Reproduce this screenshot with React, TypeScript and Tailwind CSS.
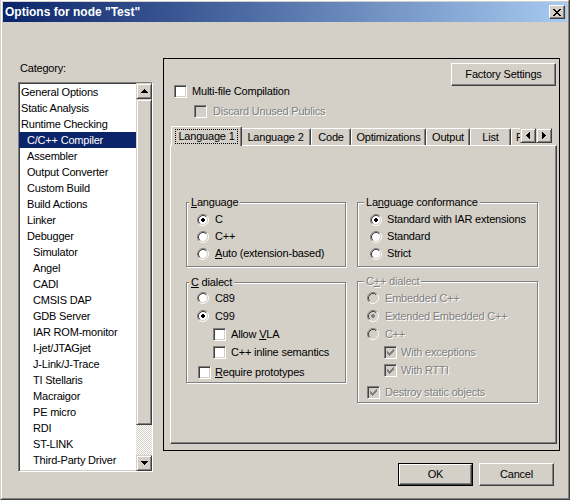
import React from "react";

const F = "font-['Liberation_Sans',Arial,sans-serif]";

const raisedBtn =
  "border border-t-white border-l-white border-r-[#404040] border-b-[#404040] shadow-[inset_-1px_-1px_0_#808080]";
const raisedSb =
  "border border-t-[#d4d0c8] border-l-[#d4d0c8] border-r-[#404040] border-b-[#404040] shadow-[inset_1px_1px_0_#fff,inset_-1px_-1px_0_#808080]";
const sunken =
  "border border-t-[#808080] border-l-[#808080] border-r-white border-b-white shadow-[inset_1px_1px_0_#404040,inset_-1px_-1px_0_#d4d0c8]";
const disText = "text-[#808080] [text-shadow:1px_1px_0_#fff]";

function Check({ checked = false, disabled = false }: { checked?: boolean; disabled?: boolean }) {
  const c = disabled ? "#808080" : "#000";
  return (
    <span
      className={`relative inline-block w-[13px] h-[13px] shrink-0 ${sunken} ${disabled ? "bg-[#d4d0c8]" : "bg-white"}`}
    >
      {checked && (
        <svg
          className="absolute left-[-1px] top-[-1px]"
          width="13"
          height="13"
          viewBox="0 0 13 13"
          shapeRendering="crispEdges"
          fill={c}
        >
          <rect x="9" y="3" width="1" height="1" />
          <rect x="8" y="4" width="2" height="1" />
          <rect x="3" y="5" width="1" height="1" />
          <rect x="7" y="5" width="3" height="1" />
          <rect x="3" y="6" width="2" height="1" />
          <rect x="6" y="6" width="3" height="1" />
          <rect x="3" y="7" width="5" height="1" />
          <rect x="4" y="8" width="3" height="1" />
          <rect x="5" y="9" width="1" height="1" />
        </svg>
      )}
    </span>
  );
}

function Radio({ checked = false, disabled = false }: { checked?: boolean; disabled?: boolean }) {
  return (
    <svg width="12" height="12" viewBox="0 0 12 12" className="shrink-0">
      <circle cx="6" cy="6" r="4.2" fill={disabled ? "#d4d0c8" : "#fff"} />
      <path d="M2.11 9.89 A5.5 5.5 0 0 1 9.89 2.11" fill="none" stroke="#808080" strokeWidth="1" />
      <path d="M9.89 2.11 A5.5 5.5 0 0 1 2.11 9.89" fill="none" stroke="#fff" strokeWidth="1" />
      <path d="M2.82 9.18 A4.5 4.5 0 0 1 9.18 2.82" fill="none" stroke="#404040" strokeWidth="1" />
      <path d="M9.18 2.82 A4.5 4.5 0 0 1 2.82 9.18" fill="none" stroke="#d4d0c8" strokeWidth="1" />
      {checked && (
        <g fill={disabled ? "#808080" : "#000"} shapeRendering="crispEdges">
          <rect x="5" y="4" width="2" height="4" />
          <rect x="4" y="5" width="4" height="2" />
        </g>
      )}
    </svg>
  );
}

function ArrowUp() {
  return (
    <svg width="7" height="4" viewBox="0 0 7 4" shapeRendering="crispEdges" fill="#000">
      <rect x="3" y="0" width="1" height="1" />
      <rect x="2" y="1" width="3" height="1" />
      <rect x="1" y="2" width="5" height="1" />
      <rect x="0" y="3" width="7" height="1" />
    </svg>
  );
}
function ArrowDown() {
  return (
    <svg width="7" height="4" viewBox="0 0 7 4" shapeRendering="crispEdges" fill="#000">
      <rect x="0" y="0" width="7" height="1" />
      <rect x="1" y="1" width="5" height="1" />
      <rect x="2" y="2" width="3" height="1" />
      <rect x="3" y="3" width="1" height="1" />
    </svg>
  );
}
function ArrowLeft() {
  return (
    <svg width="4" height="7" viewBox="0 0 4 7" shapeRendering="crispEdges" fill="#000">
      <rect x="0" y="3" width="1" height="1" />
      <rect x="1" y="2" width="1" height="3" />
      <rect x="2" y="1" width="1" height="5" />
      <rect x="3" y="0" width="1" height="7" />
    </svg>
  );
}
function ArrowRight() {
  return (
    <svg width="4" height="7" viewBox="0 0 4 7" shapeRendering="crispEdges" fill="#000">
      <rect x="0" y="0" width="1" height="7" />
      <rect x="1" y="1" width="1" height="5" />
      <rect x="2" y="2" width="1" height="3" />
      <rect x="3" y="3" width="1" height="1" />
    </svg>
  );
}
function XGlyph() {
  return (
    <svg width="8" height="7" viewBox="0 0 8 7" shapeRendering="crispEdges" fill="#000">
      <rect x="0" y="0" width="2" height="1" />
      <rect x="6" y="0" width="2" height="1" />
      <rect x="1" y="1" width="2" height="1" />
      <rect x="5" y="1" width="2" height="1" />
      <rect x="2" y="2" width="4" height="1" />
      <rect x="3" y="3" width="2" height="1" />
      <rect x="2" y="4" width="4" height="1" />
      <rect x="1" y="5" width="2" height="1" />
      <rect x="5" y="5" width="2" height="1" />
      <rect x="0" y="6" width="2" height="1" />
      <rect x="6" y="6" width="2" height="1" />
    </svg>
  );
}

const items: [string, number][] = [
  ["General Options", 0],
  ["Static Analysis", 0],
  ["Runtime Checking", 0],
  ["C/C++ Compiler", 1],
  ["Assembler", 1],
  ["Output Converter", 1],
  ["Custom Build", 1],
  ["Build Actions", 1],
  ["Linker", 1],
  ["Debugger", 1],
  ["Simulator", 2],
  ["Angel", 2],
  ["CADI", 2],
  ["CMSIS DAP", 2],
  ["GDB Server", 2],
  ["IAR ROM-monitor", 2],
  ["I-jet/JTAGjet", 2],
  ["J-Link/J-Trace", 2],
  ["TI Stellaris", 2],
  ["Macraigor", 2],
  ["PE micro", 2],
  ["RDI", 2],
  ["ST-LINK", 2],
  ["Third-Party Driver", 2],
];

const indent = ["pl-[2px]", "pl-[8px]", "pl-[14px]"];

function Group({
  title,
  titleClass,
  className,
  children,
}: {
  title: React.ReactNode;
  titleClass: string;
  className: string;
  children: React.ReactNode;
}) {
  return (
    <div
      className={`relative border border-[#808080] shadow-[1px_1px_0_#fff,inset_1px_1px_0_#fff] flex flex-col ${className}`}
    >
      <span className={`absolute top-[-7px] bg-[#d4d0c8] px-[2px] leading-[13px] whitespace-nowrap ${titleClass}`}>
        {title}
      </span>
      {children}
    </div>
  );
}

const tabs: { label: string; w: string; extra?: string }[] = [
  { label: "Language 2", w: "w-[71px]" },
  { label: "Code", w: "w-[40px]" },
  { label: "Optimizations", w: "w-[75px]" },
  { label: "Output", w: "w-[44px]" },
  { label: "List", w: "w-[41px]" },
  { label: "Preprocessor", w: "w-[80px]", extra: "justify-start pl-[4px]" },
];

export default function App() {
  return (
    <div
      className={`${F} text-[11px] leading-[13px] tracking-[-0.2px] text-black w-[570px] h-[500px] bg-[#d4d0c8] border-l border-r border-b border-l-[#d4d0c8] border-r-[#404040] border-b-[#404040] select-none overflow-hidden`}
    >
      <div className="h-full border border-l-white border-t-white border-r-[#808080] border-b-[#808080] p-[1px] flex flex-col">
        {/* Title bar */}
        <div className="h-[20px] shrink-0 flex items-center justify-between pl-[2px] pr-[2px] bg-[linear-gradient(to_right,#0a246a,#a6caf0)]">
          <span className="text-white font-bold text-[12px] leading-[14px] tracking-normal">
            {'Options for node "Test"'}
          </span>
          <div className={`w-[16px] h-[14px] bg-[#d4d0c8] ${raisedBtn} flex items-center justify-center`}>
            <XGlyph />
          </div>
        </div>

        {/* Body */}
        <div className="flex pl-[15px]">
          {/* Category column */}
          <div className="mt-[40px] w-[135px] flex flex-col">
            <div className="h-[13px] leading-[13px] pl-[2px]">Category:</div>
            <div className={`mt-[7px] h-[390px] bg-white ${sunken} flex`}>
              <div className="flex-1 flex flex-col pt-[1px]">
                {items.map(([name, lvl]) => {
                  const sel = name === "C/C++ Compiler";
                  return (
                    <div
                      key={name}
                      className={`h-[16px] leading-[16px] whitespace-nowrap ${indent[lvl]} ${
                        sel ? "bg-[#0a246a] text-white" : ""
                      }`}
                    >
                      {name}
                    </div>
                  );
                })}
              </div>
              <div className="w-[16px] flex flex-col">
                <div className={`h-[16px] bg-[#d4d0c8] ${raisedSb} flex items-center justify-center`}>
                  <ArrowUp />
                </div>
                <div className={`h-[326px] bg-[#d4d0c8] ${raisedSb}`} />
                <div className="flex-1 bg-[repeating-conic-gradient(#d4d0c8_0_25%,#fff_0_50%)] bg-[length:2px_2px]" />
                <div className={`h-[16px] bg-[#d4d0c8] ${raisedSb} flex items-center justify-center`}>
                  <ArrowDown />
                </div>
              </div>
            </div>
          </div>

          {/* Right column */}
          <div className="ml-[10px] mt-[36px] flex flex-col">
            <div className="w-[397px] h-[393px] border border-black flex flex-col">
              <div className="flex justify-between items-start">
                <div className="pl-[10px] pt-[26px] flex flex-col">
                  <div className="h-[13px] flex items-center gap-[5px]">
                    <Check />
                    <span className="leading-[13px]">Multi-file Compilation</span>
                  </div>
                  <div className="mt-[7px] ml-[20px] h-[13px] flex items-center gap-[6px]">
                    <Check disabled />
                    <span className={`leading-[13px] ${disText}`}>Discard Unused Publics</span>
                  </div>
                </div>
                <div
                  className={`mt-[4px] mr-[3px] w-[105px] h-[23px] ${raisedBtn} flex items-center justify-center`}
                >
                  Factory Settings
                </div>
              </div>

              {/* Tab strip */}
              <div className="mt-[8px] ml-[6px] w-[387px] h-[20px] mb-[-1px] relative z-10 overflow-hidden">
                <div className="flex items-end h-full pl-[3px]">
                  <div
                    className={`relative z-10 w-[71px] h-[20px] -mx-[2px] bg-[#d4d0c8] border-l border-t border-r border-l-white border-t-white border-r-[#404040] shadow-[inset_-1px_0_0_#808080] rounded-tl-[2px] rounded-tr-[2px] flex justify-center pt-[2px] shrink-0`}
                  >
                    <span className="h-[15px] px-[2px] border border-dotted border-black leading-[13px] whitespace-nowrap">
                      Language 1
                    </span>
                  </div>
                  {tabs.map((t) => (
                    <div
                      key={t.label}
                      className={`${t.w} h-[17px] mb-[1px] shrink-0 border-l border-t border-r border-l-white border-t-white border-r-[#404040] shadow-[inset_-1px_0_0_#808080] rounded-tl-[2px] rounded-tr-[2px] flex items-center whitespace-nowrap ${
                        t.extra ?? "justify-center"
                      }`}
                    >
                      {t.label}
                    </div>
                  ))}
                </div>
                <div className="absolute right-0 top-0 w-[37px] h-[19px] bg-[#d4d0c8] flex pt-[2px] z-20">
                  <div className={`w-[16px] h-[15px] ${raisedSb} bg-[#d4d0c8] flex items-center justify-center`}>
                    <ArrowLeft />
                  </div>
                  <div className={`w-[16px] h-[15px] ${raisedSb} bg-[#d4d0c8] flex items-center justify-center`}>
                    <ArrowRight />
                  </div>
                </div>
              </div>

              {/* Tab page */}
              <div className={`ml-[6px] w-[387px] h-[299px] ${raisedBtn} pt-[56px] pl-[15px] flex gap-[11px] items-start`}>
                {/* Left column */}
                <div className="w-[160px] flex flex-col gap-[15px]">
                  <Group
                    className="pt-[8px] pb-[4px] pl-[10px]"
                    titleClass="left-[2px]"
                    title={
                      <>
                        <u>L</u>anguage
                      </>
                    }
                  >
                    <div className="h-[17px] flex items-center gap-[6px]">
                      <Radio checked />
                      <span>C</span>
                    </div>
                    <div className="h-[17px] flex items-center gap-[6px]">
                      <Radio />
                      <span>C++</span>
                    </div>
                    <div className="h-[17px] flex items-center gap-[6px]">
                      <Radio />
                      <span>
                        <u>A</u>uto (extension-based)
                      </span>
                    </div>
                  </Group>
                  <Group
                    className="pt-[6px] pb-[1px]"
                    titleClass="left-[2px]"
                    title={
                      <>
                        <u>C</u> dialect
                      </>
                    }
                  >
                    <div className="h-[18px] pl-[10px] flex items-center gap-[6px]">
                      <Radio />
                      <span>C89</span>
                    </div>
                    <div className="h-[18px] pl-[10px] flex items-center gap-[6px]">
                      <Radio checked />
                      <span>C99</span>
                    </div>
                    <div className="h-[18px] pl-[26px] flex items-center gap-[5px]">
                      <Check />
                      <span>
                        Allow <u>V</u>LA
                      </span>
                    </div>
                    <div className="h-[18px] pl-[26px] flex items-center gap-[5px]">
                      <Check />
                      <span>C++ inline semantics</span>
                    </div>
                    <div className="mt-[2px] h-[18px] pl-[11px] flex items-center gap-[4px]">
                      <Check />
                      <span>
                        <u>R</u>equire prototypes
                      </span>
                    </div>
                  </Group>
                </div>

                {/* Right column */}
                <div className="w-[181px] flex flex-col gap-[14px]">
                  <Group
                    className="pt-[8px] pb-[4px] pl-[12px]"
                    titleClass="left-[6px]"
                    title={
                      <>
                        La<u>n</u>guage conformance
                      </>
                    }
                  >
                    <div className="h-[17px] flex items-center gap-[5px]">
                      <Radio checked />
                      <span>Standard with IAR extensions</span>
                    </div>
                    <div className="h-[17px] flex items-center gap-[5px]">
                      <Radio />
                      <span>Standard</span>
                    </div>
                    <div className="h-[17px] flex items-center gap-[5px]">
                      <Radio />
                      <span>Strict</span>
                    </div>
                  </Group>
                  <Group
                    className={`pt-[7px] pb-[1px] ${disText}`}
                    titleClass="left-[6px]"
                    title={
                      <>
                        C<u>+</u>+ dialect
                      </>
                    }
                  >
                    <div className="h-[18px] pl-[9px] flex items-center gap-[6px]">
                      <Radio disabled />
                      <span>Embedded C++</span>
                    </div>
                    <div className="h-[18px] pl-[9px] flex items-center gap-[6px]">
                      <Radio checked disabled />
                      <span>Extended Embedded C++</span>
                    </div>
                    <div className="h-[18px] pl-[9px] flex items-center gap-[6px]">
                      <Radio disabled />
                      <span>C++</span>
                    </div>
                    <div className="h-[18px] pl-[26px] flex items-center gap-[4px]">
                      <Check checked disabled />
                      <span>With exceptions</span>
                    </div>
                    <div className="h-[18px] pl-[26px] flex items-center gap-[4px]">
                      <Check checked disabled />
                      <span>With RTTI</span>
                    </div>
                    <div className="mt-[4px] h-[18px] pl-[9px] flex items-center gap-[5px]">
                      <Check checked disabled />
                      <span>Destroy static objects</span>
                    </div>
                  </Group>
                </div>
              </div>
            </div>

            {/* Buttons */}
            <div className="mt-[12px] flex justify-end gap-[6px] pr-[6px]">
              <div className="w-[75px] h-[23px] border border-black">
                <div className={`w-full h-full ${raisedBtn} flex items-center justify-center`}>OK</div>
              </div>
              <div className={`w-[75px] h-[23px] ${raisedBtn} flex items-center justify-center`}>Cancel</div>
            </div>
          </div>
        </div>
      </div>
    </div>
  );
}
